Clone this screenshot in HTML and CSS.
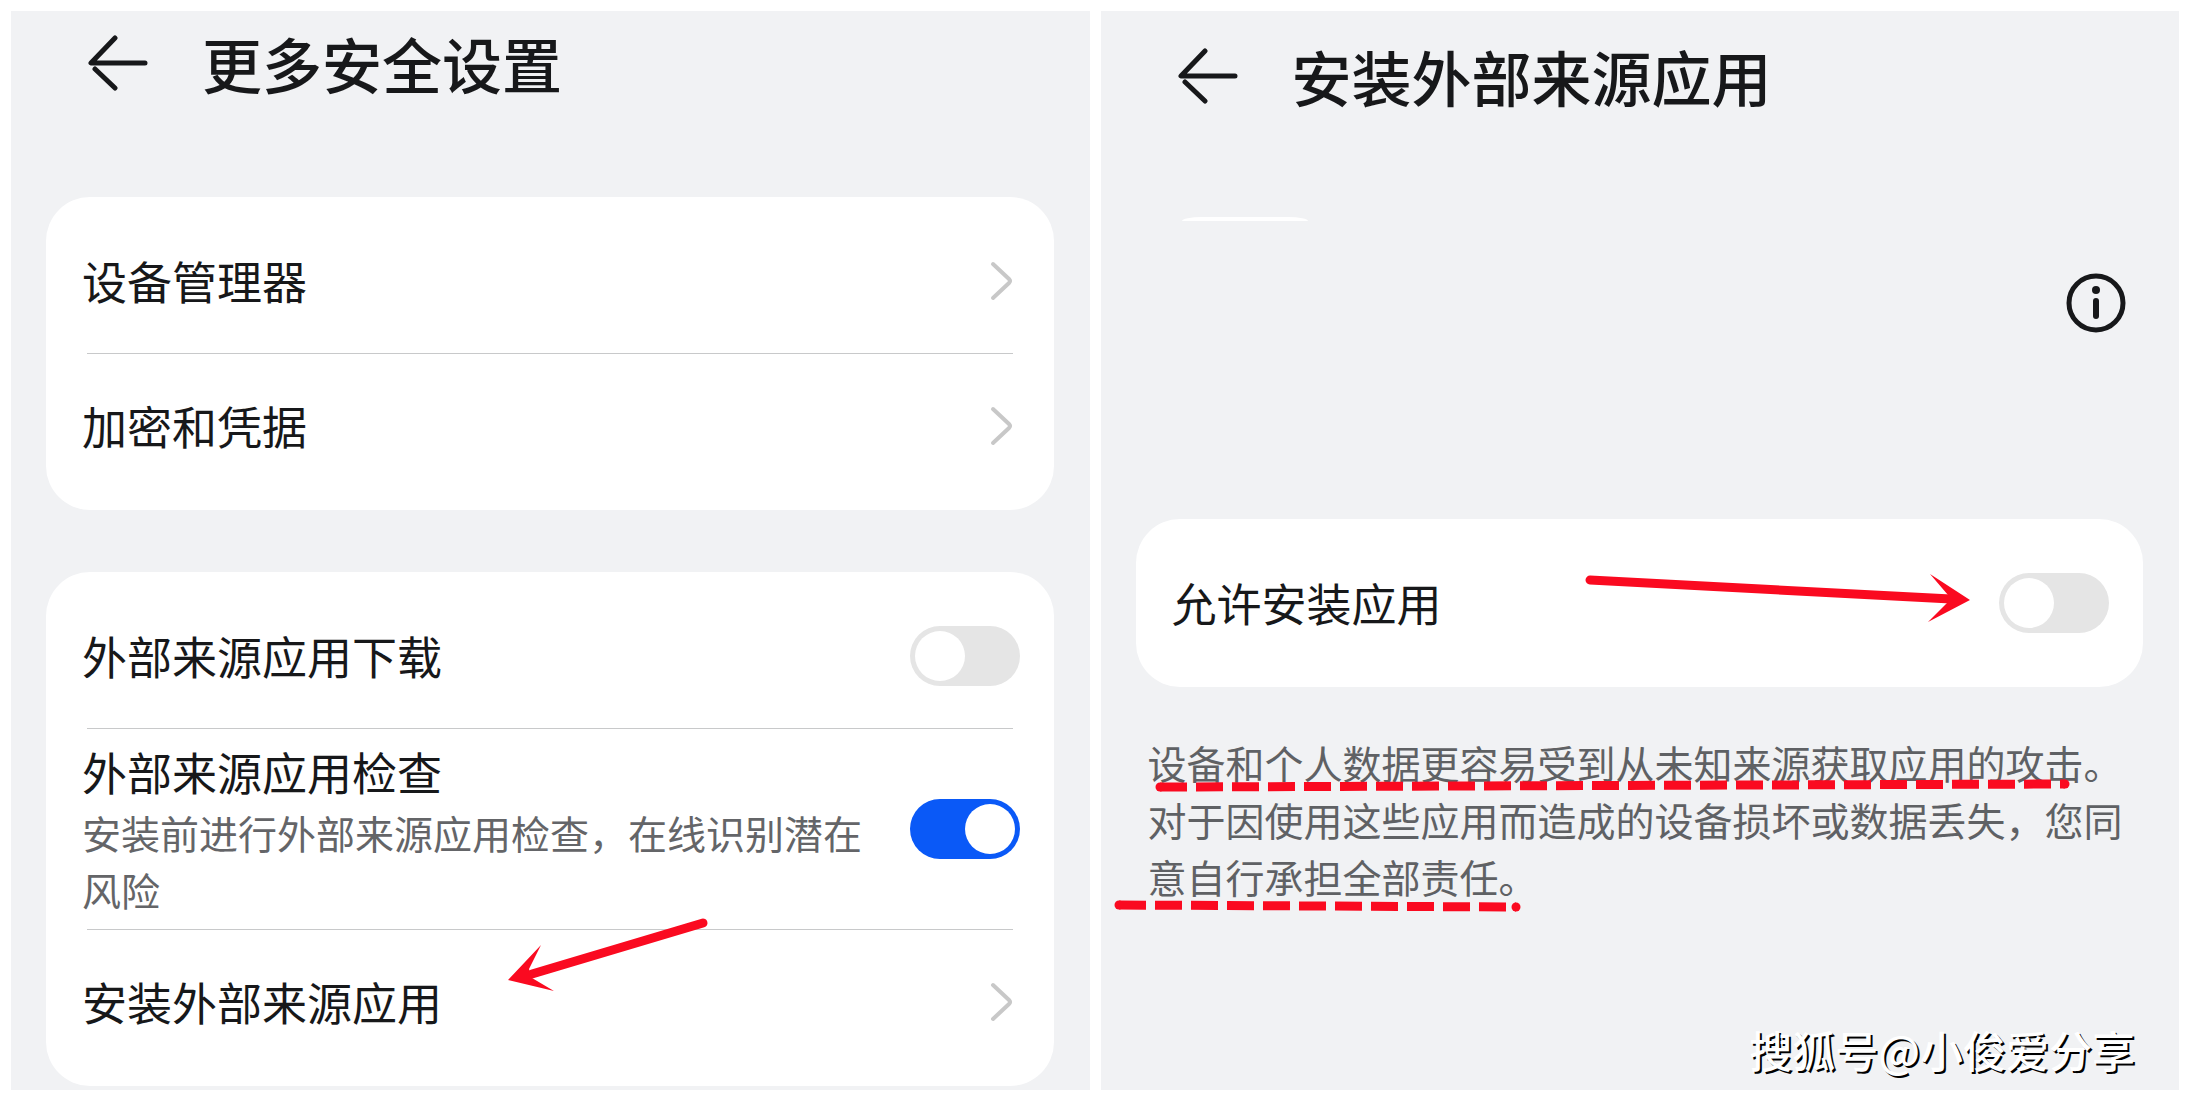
FILE: index.html
```html
<!DOCTYPE html>
<html lang="zh-CN">
<head>
    <meta charset="UTF-8">
    <meta name="viewport" content="width=device-width, initial-scale=1.0">
    <title>更多安全设置</title>
    <link rel="stylesheet" href="styles.css">
</head>
<body>

<main class="panel">
    <header class="header">
        <button class="back" type="button" aria-label="返回">
            <svg width="60" height="56" viewBox="0 0 60 56"><path d="M27 3 L3 28 H57 M7 34 L27 53"/></svg>
        </button>
        <h1>更多安全设置</h1>
    </header>

    <section class="card">
        <a class="row" href="#">
            <span class="name">设备管理器</span>
            <svg class="chevron" width="24" height="40" viewBox="0 0 24 40"><path d="M3 3 L19 18 Q21 20 19 22 L3 37"/></svg>
        </a>
        <hr>
        <a class="row" href="#">
            <span class="name">加密和凭据</span>
            <svg class="chevron" width="24" height="40" viewBox="0 0 24 40"><path d="M3 3 L19 18 Q21 20 19 22 L3 37"/></svg>
        </a>
    </section>

    <section class="card">
        <div class="row">
            <label class="name" for="download">外部来源应用下载</label>
            <input class="switch" type="checkbox" id="download">
        </div>
        <hr>
        <div class="row tall">
            <label class="text" for="check">
                <span class="name">外部来源应用检查</span>
                <span class="desc">安装前进行外部来源应用检查，在线识别潜在风险</span>
            </label>
            <input class="switch" type="checkbox" id="check" checked>
        </div>
        <hr>
        <a class="row" href="#">
            <span class="name">安装外部来源应用</span>
            <svg class="chevron" width="24" height="40" viewBox="0 0 24 40"><path d="M3 3 L19 18 Q21 20 19 22 L3 37"/></svg>
            <svg class="mark arrow-left" width="210" height="80" viewBox="0 0 210 80">
                <path class="line" d="M24 60 L195 9"/>
                <path class="head" d="M0 66 L33 31 L21 55 L24 64 L46 77 Z"/>
            </svg>
        </a>
    </section>
</main>

<main class="panel install">
    <header class="header">
        <button class="back" type="button" aria-label="返回">
            <svg width="60" height="56" viewBox="0 0 60 56"><path d="M27 3 L3 28 H57 M7 34 L27 53"/></svg>
        </button>
        <h1>安装外部来源应用</h1>
    </header>

    <div class="app-edge"></div>
    <div class="app-info">
        <button class="info" type="button" aria-label="应用信息">
            <svg width="60" height="60" viewBox="0 0 60 60">
                <circle cx="30" cy="30" r="27"/>
                <path class="stem" d="M30 28 V43"/>
                <circle class="dot" cx="30" cy="17" r="4"/>
            </svg>
        </button>
    </div>

    <section class="card">
        <div class="row">
            <label class="name" for="allow">允许安装应用</label>
            <input class="switch" type="checkbox" id="allow">
            <svg class="mark arrow-right" width="390" height="60" viewBox="0 0 390 60">
                <path class="line" d="M5 13 L366 32"/>
                <path class="head" d="M385 33 L345 7 L363 28 L362 36 L343 55 Z"/>
            </svg>
        </div>
    </section>

    <p class="notice">
        设备和个人数据更容易受到从未知来源获取应用的攻击。对于因使用这些应用而造成的设备损坏或数据丢失，您同意自行承担全部责任。
        <svg class="mark underline-first" width="920" height="20" viewBox="0 0 920 20">
            <path class="dash" d="M5 12 L910 9"/>
            <circle cx="5" cy="12" r="4.5"/><circle cx="910" cy="9" r="4.5"/>
        </svg>
        <svg class="mark underline-last" width="420" height="20" viewBox="0 0 420 20">
            <path class="dash" d="M5 9 L402 11"/>
            <circle cx="5" cy="9" r="4.5"/><circle cx="402" cy="11" r="4.5"/>
        </svg>
    </p>

    <footer class="watermark">搜狐号@小俊爱分享</footer>
</main>

</body>
</html>
```
FILE: styles.css
```css
* {
    box-sizing: border-box;
}

body {
    margin: 0;
    padding: 11px 11px 10px;
    display: flex;
    gap: 11px;
    min-height: 100vh;
    background-color: #fff;
    color: #17181a;
    font-family: "Noto Sans CJK SC", sans-serif;
}

.panel {
    flex: 1;
    min-width: 0;
    padding: 16px 36px 3px 35px;
    display: flex;
    flex-direction: column;
    background-color: #f1f2f4;
}

.header {
    display: flex;
    align-items: center;
    gap: 54px;
    height: 72px;
    padding-left: 42px;
}

.install .header {
    margin-top: 13px;
}

h1 {
    margin: 0;
    font-size: 60px;
    line-height: 72px;
    font-weight: 500;
}

button {
    padding: 0;
    border: none;
    background: none;
    cursor: pointer;
}

button svg {
    display: block;
    fill: none;
    stroke: #17181a;
    stroke-width: 5;
    stroke-linecap: round;
    stroke-linejoin: round;
}

.card {
    margin-top: 62px;
    padding: 12px 0;
    border-radius: 44px;
    background-color: #fff;
}

.header + .card {
    margin-top: 98px;
}

.row {
    position: relative;
    display: flex;
    align-items: center;
    justify-content: space-between;
    height: 144px;
    padding: 0 34px 0 36px;
    color: inherit;
    text-decoration: none;
}

.row.tall {
    height: 200px;
}

.name {
    display: block;
    font-size: 45px;
    line-height: 64px;
}

.text {
    width: 780px;
}

.desc {
    display: block;
    font-size: 39px;
    line-height: 57px;
    color: #646568;
}

hr {
    width: calc(100% - 82px);
    height: 1px;
    margin: 0 auto;
    border: none;
    background-color: #c8c9ca;
}

.chevron {
    margin-right: 6px;
    fill: none;
    stroke: #c8c8c8;
    stroke-width: 4;
    stroke-linecap: round;
}

.switch {
    appearance: none;
    flex: none;
    width: 110px;
    height: 60px;
    margin: 0;
    padding: 5px;
    display: flex;
    border-radius: 30px;
    background-color: #e5e5e5;
    cursor: pointer;
}

.switch::before {
    content: "";
    width: 50px;
    height: 50px;
    border-radius: 50%;
    background-color: #fff;
}

.switch:checked {
    justify-content: flex-end;
    background-color: #0a59f7;
}

/* bottom edge of the app card */
.app-edge {
    width: 126px;
    height: 4px;
    margin: 105px 0 52px 46px;
    border-radius: 20px 20px 0 0 / 4px 4px 0 0;
    background-color: #fff;
}

.app-info {
    display: flex;
    justify-content: flex-end;
    padding-right: 17px;
}

.info .stem {
    stroke-width: 6;
}

.info .dot {
    fill: #17181a;
    stroke: none;
}

.install .card {
    margin-top: 186px;
}

.notice {
    position: relative;
    margin: 47px 0 0;
    padding: 0 20px 0 12px;
    font-size: 39px;
    line-height: 57px;
    color: #5f6164;
}

.watermark {
    margin-top: auto;
    padding: 0 8px 8px;
    text-align: right;
    font-size: 43px;
    line-height: 60px;
    font-weight: 500;
    color: #fff;
    text-shadow: 2px 2px 0 #000;
}

/* red marks drawn over the content */
.mark {
    position: absolute;
    fill: #fa0a20;
    pointer-events: none;
}

.mark .line {
    stroke: #fa0a20;
    stroke-width: 9;
    stroke-linecap: round;
}

.mark .dash {
    stroke: #fa0a20;
    stroke-width: 9;
    stroke-dasharray: 27 9;
}

.arrow-left {
    left: 462px;
    top: -16px;
}

.arrow-right {
    right: 168px;
    top: 36px;
}

.underline-first {
    left: 19px;
    top: 41px;
}

.underline-last {
    left: -22px;
    top: 162px;
}
```
